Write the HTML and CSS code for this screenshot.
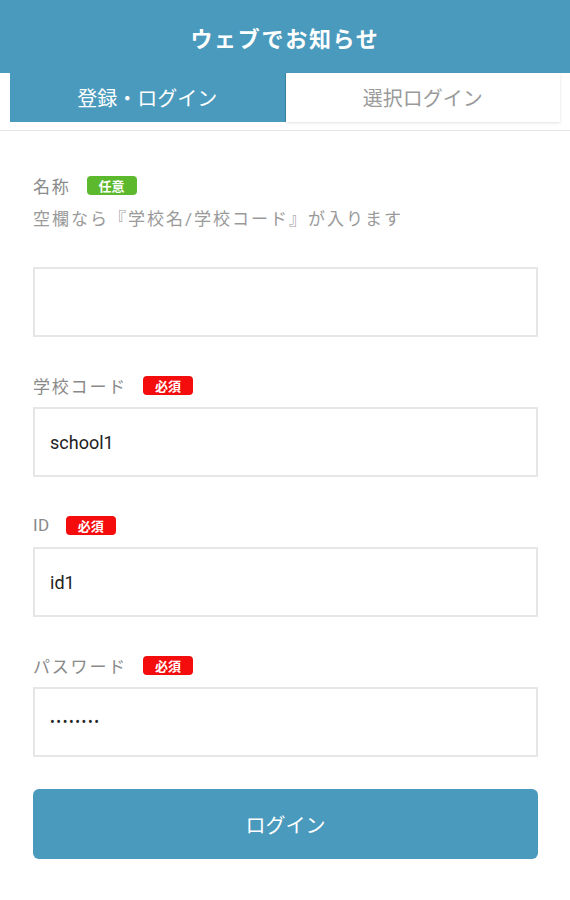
FILE: index.html
```html
<!DOCTYPE html>
<html lang="ja">
<head>
  <meta charset="UTF-8">
  <meta name="viewport" content="width=device-width, initial-scale=1.0">
  <title>ウェブでお知らせ</title>
  <link rel="stylesheet" href="styles.css">
</head>
<body>
  <header class="app-header">ウェブでお知らせ</header>

  <nav class="tabs">
    <div class="tab tab-active">登録・ログイン</div>
    <div class="tab">選択ログイン</div>
  </nav>

  <form class="login-form">
    <div class="form-group">
      <div class="label-row">
        <label for="name">名称</label>
        <span class="badge badge-optional">任意</span>
      </div>
      <p class="help">空欄なら『学校名/学校コード』が入ります</p>
      <input type="text" id="name">
    </div>
    <div class="form-group">
      <div class="label-row">
        <label for="schoolCode">学校コード</label>
        <span class="badge badge-required">必須</span>
      </div>
      <input type="text" id="schoolCode" value="school1">
    </div>
    <div class="form-group">
      <div class="label-row">
        <label for="userId" class="label-latin">ID</label>
        <span class="badge badge-required">必須</span>
      </div>
      <input type="text" id="userId" value="id1">
    </div>
    <div class="form-group">
      <div class="label-row">
        <label for="password">パスワード</label>
        <span class="badge badge-required">必須</span>
      </div>
      <input type="password" id="password" value="password">
    </div>
    <button type="button" class="btn-login">ログイン</button>
  </form>
</body>
</html>
```

FILE: styles.css
```css
body {
  margin: 0;
  padding: 0;
  background: #fff;
  font-family: Roboto, "Noto Sans CJK JP", sans-serif;
  color: #333;
}

.app-header {
  height: 73px;
  display: flex;
  align-items: center;
  justify-content: center;
  background-color: #4a9abd;
  color: #fff;
  font-size: 22px;
  font-weight: bold;
  letter-spacing: 1.7px;
}

.tabs {
  display: flex;
  padding: 0 10px 8px;
  border-bottom: 1px solid #e6e6e6;
}

.tab {
  flex: 1;
  height: 49px;
  display: flex;
  align-items: center;
  justify-content: center;
  font-size: 20px;
  color: #9a9a9a;
  background: #fff;
  box-shadow: 0 1px 3px rgba(0, 0, 0, 0.12);
}

.tab-active {
  background-color: #4a9abd;
  color: #fff;
  box-shadow: none;
  border-right: 1px solid #3d88a9;
}

.login-form {
  padding: 42px 32px 40px 33px;
}

.form-group {
  margin-bottom: 36px;
}

.label-row {
  display: flex;
  align-items: center;
  height: 24px;
  margin-bottom: 10px;
}

label {
  font-size: 17px;
  color: #8a8a8a;
  letter-spacing: 1.8px;
}

.label-latin {
  letter-spacing: 0.5px;
}

.badge {
  margin-left: 16px;
  width: 50px;
  height: 19px;
  border-radius: 4px;
  display: flex;
  align-items: center;
  justify-content: center;
  font-size: 13px;
  font-weight: bold;
  color: #fff;
}

.badge-optional {
  background-color: #5cb82c;
}

.badge-required {
  background-color: #f50d0d;
}

.help {
  margin: 8px 0 36px;
  line-height: 24px;
  font-size: 17px;
  color: #9a9a9a;
  letter-spacing: 2px;
}

input {
  display: block;
  width: 100%;
  height: 70px;
  padding: 0 15px;
  font-family: Roboto, "Noto Sans CJK JP", sans-serif;
  font-size: 18px;
  color: #222;
  border: 2px solid #e6e6e6;
  border-radius: 0;
  box-sizing: border-box;
  outline: none;
}

input[type="password"] {
  font-size: 14px;
  letter-spacing: 1.6px;
}

.btn-login {
  display: block;
  width: 100%;
  height: 70px;
  margin-top: -4px;
  border: none;
  border-radius: 6px;
  background-color: #4a9abd;
  color: #fff;
  font-family: Roboto, "Noto Sans CJK JP", sans-serif;
  font-size: 20px;
  cursor: pointer;
}
```
